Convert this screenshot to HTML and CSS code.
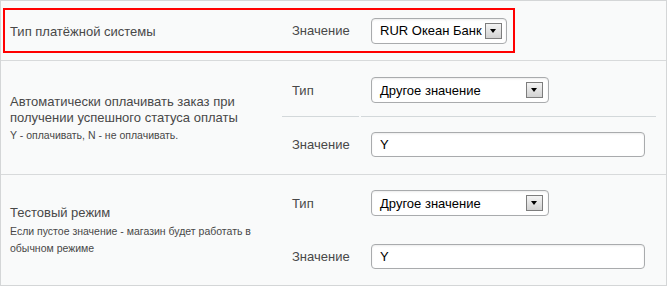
FILE: index.html
```html
<!DOCTYPE html>
<html lang="ru">
<head>
    <meta charset="UTF-8">
    <title>Платёжная система</title>
    <link rel="stylesheet" href="styles.css">
</head>
<body>
    <div class="panel">
        <div class="row first">
            <div class="mark">
                <div class="title">Тип платёжной системы</div>
                <div class="label">Значение</div>
                <div class="ctrl">
                    <div class="select short"><span>RUR Океан Банк</span><i class="arrow"></i></div>
                </div>
            </div>
        </div>

        <div class="row">
            <div class="title">
                Автоматически оплачивать заказ при получении успешного статуса оплаты
                <small>Y - оплачивать, N - не оплачивать.</small>
            </div>
            <div class="params">
                <div class="line top">
                    <div class="label">Тип</div>
                    <div class="ctrl">
                        <div class="select"><span>Другое значение</span><i class="arrow"></i></div>
                    </div>
                </div>
                <div class="line bottom">
                    <div class="label">Значение</div>
                    <div class="ctrl"><input type="text" value="Y"></div>
                </div>
            </div>
        </div>

        <div class="row last">
            <div class="title">
                Тестовый режим
                <small>Если пустое значение - магазин будет работать в обычном режиме</small>
            </div>
            <div class="params">
                <div class="line top">
                    <div class="label">Тип</div>
                    <div class="ctrl">
                        <div class="select"><span>Другое значение</span><i class="arrow"></i></div>
                    </div>
                </div>
                <div class="line bottom">
                    <div class="label">Значение</div>
                    <div class="ctrl"><input type="text" value="Y"></div>
                </div>
            </div>
        </div>
    </div>
</body>
</html>
```

FILE: styles.css
```css
*{
    padding: 0;
    margin: 0;
    box-sizing: border-box;
}
body{
    font-family: "Liberation Sans", Arial, sans-serif;
    font-size: 13px;
    color: #484848;
    background: #fff;
}
.panel{
    width: 667px;
    height: 286px;
    border: 1px solid #d4d6d7;
    background-color: #f9fafa;
}
.row{
    display: flex;
    border-bottom: 1px solid #d8dadb;
}
.row.last{
    border-bottom: none;
}
.row.first{
    height: 60px;
    padding: 7px 0 0 2px;
}
.mark{
    display: flex;
    align-items: center;
    width: 512px;
    height: 45px;
    border: 2px solid #f00;
    padding-left: 5px;
}
.mark .title{
    width: 272px;
    padding-left: 0;
}
.title{
    width: 281px;
    padding-left: 9px;
    line-height: 16px;
    align-self: center;
    margin-top: 2px;
}
.title small{
    display: block;
    font-size: 10.5px;
    line-height: 17px;
    margin-top: 1px;
}
.row.last .title small{
    margin-top: 2px;
}
.params{
    display: flex;
    flex-direction: column;
    width: 374px;
}
.line{
    display: flex;
    align-items: center;
}
.line.top{
    padding: 16px 0 13px;
    border-bottom: 1px solid transparent;
    background-image: linear-gradient(to right, #d3d8da 77px, transparent 77px, transparent 79px, #d3d8da 79px);
    background-size: 100% 1px;
    background-position: bottom;
    background-repeat: no-repeat;
    background-origin: border-box;
}
.line.bottom{
    padding: 15px 0 17px;
}
.row.last .line.top{
    padding: 15px 0 13px;
    background-image: none;
}
.row.last .line.bottom{
    padding: 14px 0 15px;
}
.label{
    width: 89px;
    padding-left: 10px;
}
.select{
    display: flex;
    align-items: center;
    justify-content: space-between;
    width: 178px;
    height: 26px;
    padding: 0 5px 0 8px;
    border: 1px solid #a9abad;
    border-radius: 4px;
    background: #fff;
    box-shadow: inset 0 1px 2px rgba(0,0,0,0.08);
    color: #000;
    font-size: 13px;
}
.select.short{
    width: 136px;
    padding-right: 4px;
}
.arrow{
    width: 17px;
    height: 16px;
    border: 1px solid #7d7d7d;
    background: linear-gradient(#f4f4f4, #d2d2d2);
    position: relative;
}
.arrow::after{
    content: "";
    position: absolute;
    left: 4px;
    top: 5px;
    border-left: 3.5px solid transparent;
    border-right: 3.5px solid transparent;
    border-top: 4px solid #000;
}
input{
    display: block;
    width: 274px;
    height: 25px;
    padding: 0 8px;
    border: 1px solid #a9abad;
    border-radius: 4px;
    background: #fff;
    box-shadow: inset 0 1px 2px rgba(0,0,0,0.08);
    font-family: "Liberation Sans", Arial, sans-serif;
    font-size: 13px;
    color: #000;
    outline: none;
}
```
